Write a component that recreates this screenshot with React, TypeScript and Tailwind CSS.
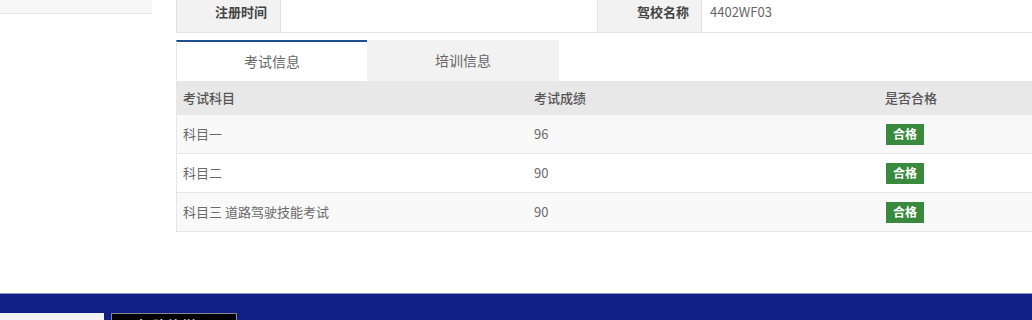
import React from "react";

const rows = [
  { name: "科目一", score: "96", bg: "bg-[#f9f9f9]" },
  { name: "科目二", score: "90", bg: "bg-white" },
  { name: "科目三 道路驾驶技能考试", score: "90", bg: "bg-[#f9f9f9]" },
];

export default function App() {
  return (
    <div
      className="w-[1032px] h-[320px] bg-white overflow-hidden flex flex-col"
      style={{ fontFamily: '"Noto Sans CJK SC", "Noto Sans", sans-serif' }}
    >
      <div className="h-[293px] flex">
        {/* left sidebar remnant */}
        <div className="w-[152px] shrink-0">
          <div className="h-[14px] bg-[#f7f7f7] border-b border-[#e4e4e4]" />
        </div>
        {/* main */}
        <div className="ml-[24px] w-[880px] shrink-0 flex flex-col">
          {/* info row */}
          <div className="-mt-[8px] h-[41px] flex border-b border-[#e2e2e2] text-[13px]">
            <div className="w-[105px] bg-[#f2f2f2] border-l border-r border-[#e2e2e2] flex items-center justify-end pr-[13px] font-bold text-[#444]">
              注册时间
            </div>
            <div className="w-[316px]" />
            <div className="w-[105px] bg-[#f2f2f2] border-l border-r border-[#e2e2e2] flex items-center justify-end pr-[12px] font-bold text-[#444]">
              驾校名称
            </div>
            <div className="flex items-center pl-[8px] text-[#666]">4402WF03</div>
          </div>
          {/* tabs */}
          <div className="mt-[7px] h-[41px] flex text-[14px] text-[#666]">
            <div className="w-[191px] bg-white border-t-2 border-[#1f4f8f] border-l border-l-[#e6e6e6] flex items-center justify-center">
              考试信息
            </div>
            <div className="w-[192px] bg-[#f2f2f2] flex items-center justify-center">
              培训信息
            </div>
          </div>
          {/* table */}
          <div className="w-[1060px] border-l border-[#e6e6e6] text-[13px]">
            <div className="h-[34px] bg-[#e8e8e8] flex items-center font-medium text-[#555]">
              <div className="w-[351px] pl-[6px]">考试科目</div>
              <div className="w-[351px] pl-[6px]">考试成绩</div>
              <div className="pl-[6px]">是否合格</div>
            </div>
            {rows.map((r) => (
              <div
                key={r.name}
                className={`h-[39px] ${r.bg} border-b border-[#e6e6e6] flex items-center text-[#6a6a6a]`}
              >
                <div className="w-[351px] pl-[6px]">{r.name}</div>
                <div className="w-[351px] pl-[6px]">{r.score}</div>
                <div className="pl-[7px]">
                  <span className="inline-flex items-center justify-center h-[21px] w-[38px] bg-[#3a8a3e] text-white text-[12px] font-bold">
                    合格
                  </span>
                </div>
              </div>
            ))}
          </div>
        </div>
      </div>
      {/* footer */}
      <div className="h-[27px] bg-[#101e88] border-t border-[#8f97c4] flex items-start pt-[19px]">
        <div className="w-[104px] h-[10px] bg-[#f4f4f4]" />
        <div className="ml-[7px] w-[126px] h-[10px] bg-black border border-[#888] text-white text-[12px] font-bold leading-[22px] overflow-hidden pl-[26px] tracking-[3px]">
          驾驶培训
        </div>
      </div>
    </div>
  );
}
